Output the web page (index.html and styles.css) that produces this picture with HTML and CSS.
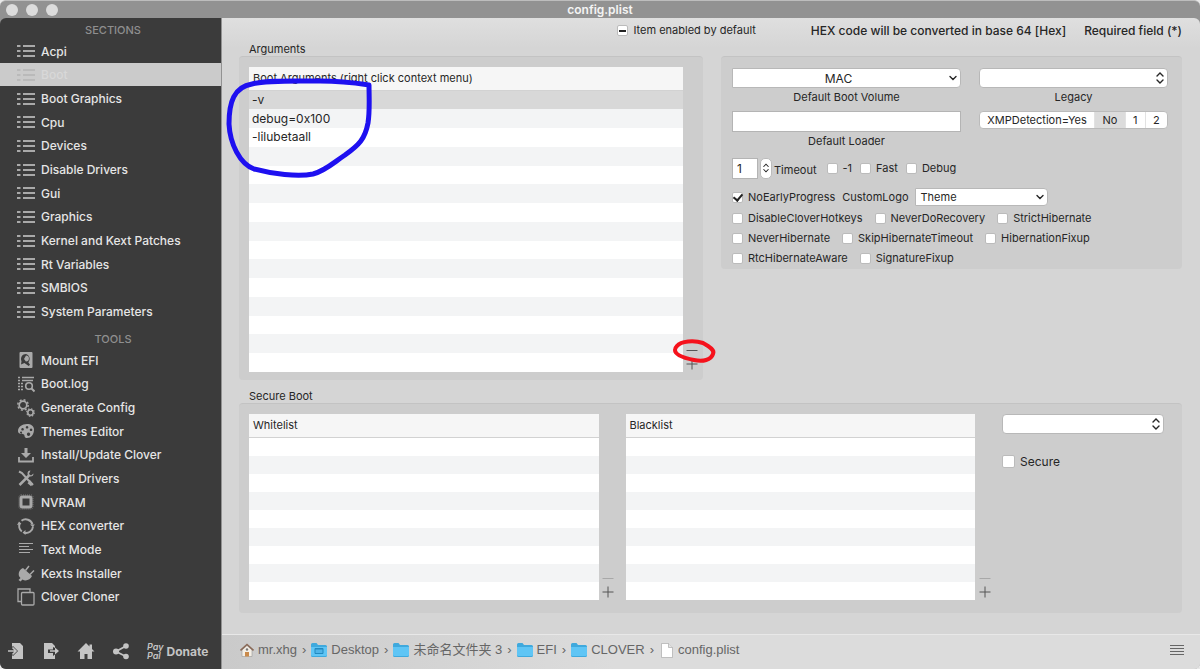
FILE: index.html
```html
<!DOCTYPE html>
<html lang="en">

<head>
    <meta charset="UTF-8">
    <meta name="viewport" content="width=device-width, initial-scale=1.0">
    <title>config.plist</title>
    <link rel="stylesheet" href="styles.css">
</head>

<body>
    <!-- shared icons -->
    <svg class="sprite" aria-hidden="true">
        <symbol id="list" viewBox="0 0 18 14">
            <path d="M0 2h3.500M0 7h3.500M0 12h3.500M6 2h12M6 7h12M6 12h12" stroke="currentColor" stroke-width="2.200" />
        </symbol>
        <symbol id="down" viewBox="0 0 8 6">
            <path d="M1 1.500l3 3 3-3" fill="none" stroke="currentColor" stroke-width="1.400" stroke-linecap="round" />
        </symbol>
        <symbol id="updown" viewBox="0 0 8 12">
            <path d="M1 4l3-3 3 3M1 8l3 3 3-3" fill="none" stroke="currentColor" stroke-width="1.400" stroke-linecap="round" />
        </symbol>
        <symbol id="plus" viewBox="0 0 12 12">
            <path d="M6 .5v11M.5 6h11" stroke="currentColor" />
        </symbol>
        <symbol id="minus" viewBox="0 0 12 12">
            <path d="M.5 6.500h11" stroke="currentColor" />
        </symbol>
        <symbol id="folder" viewBox="0 0 16 14">
            <path d="M0 1.500Q0 0 1.500 0h4l1.500 2h7.500Q16 2 16 3.500v9q0 1.500-1.500 1.500h-13Q0 14 0 12.500z" fill="#3fa9dd" />
            <path d="M0 4h16v8q0 1-1.500 1h-13Q0 13 0 12z" fill="#5fc5f5" />
        </symbol>
    </svg>

    <div class="window">
        <header class="titlebar">
            <div class="lights"><span></span><span></span><span></span></div>
            <h1>config.plist</h1>
        </header>

        <div class="content">
            <aside class="sidebar">
                <h2>SECTIONS</h2>
                <ul class="sections">
                    <li><a href="#"><svg><use href="#list" /></svg>Acpi</a></li>
                    <li class="selected"><a href="#"><svg><use href="#list" /></svg>Boot</a></li>
                    <li><a href="#"><svg><use href="#list" /></svg>Boot Graphics</a></li>
                    <li><a href="#"><svg><use href="#list" /></svg>Cpu</a></li>
                    <li><a href="#"><svg><use href="#list" /></svg>Devices</a></li>
                    <li><a href="#"><svg><use href="#list" /></svg>Disable Drivers</a></li>
                    <li><a href="#"><svg><use href="#list" /></svg>Gui</a></li>
                    <li><a href="#"><svg><use href="#list" /></svg>Graphics</a></li>
                    <li><a href="#"><svg><use href="#list" /></svg>Kernel and Kext Patches</a></li>
                    <li><a href="#"><svg><use href="#list" /></svg>Rt Variables</a></li>
                    <li><a href="#"><svg><use href="#list" /></svg>SMBIOS</a></li>
                    <li><a href="#"><svg><use href="#list" /></svg>System Parameters</a></li>
                </ul>
                <h2 class="second">TOOLS</h2>
                <ul class="tools">
                    <li><a href="#"><svg viewBox="0 0 18 18">
                        <path fill-rule="evenodd" d="M3.500 1h11q1 0 1 1v14q0 1-1 1h-11q-1 0-1-1V2q0-1 1-1zM9 3a5 5 0 0 0-4.500 7.200L4 13.500l3.400-1.500 4.300 3 1.300-1.300-1.700-2.500A5 5 0 0 0 9 3z" fill="currentColor" />
                        <path d="M9 4.500a3 3 0 1 1-.1 6L7 8z" fill="currentColor" />
                    </svg>Mount EFI</a></li>
                    <li><a href="#"><svg viewBox="0 0 18 18" fill="none" stroke="currentColor">
                        <path d="M5 2.500h12M5 5.500h11" stroke-width="1.500" />
                        <path d="M1 2.500h2.500M1 5.500h2.500M1 8.500h6M1 11.500h6M1 14.500h6" stroke-width="1.500" stroke-dasharray="2 1" />
                        <circle cx="12" cy="11" r="3.300" stroke-width="1.600" />
                        <path d="M14.500 13.500l3 3" stroke-width="2" />
                    </svg>Boot.log</a></li>
                    <li><a href="#"><svg viewBox="0 0 18 18" fill="none" stroke="currentColor">
                        <circle cx="6" cy="6" r="3.800" stroke-width="1.700" />
                        <circle cx="6" cy="6" r="5.200" stroke-width="1.500" stroke-dasharray="2 2.080" />
                        <circle cx="13.500" cy="13.500" r="2.700" stroke-width="1.600" />
                        <circle cx="13.500" cy="13.500" r="3.800" stroke-width="1.200" stroke-dasharray="1.500 1.480" />
                    </svg>Generate Config</a></li>
                    <li><a href="#"><svg viewBox="0 0 18 18">
                        <path fill-rule="evenodd" d="M10 2c4 0 7 2 7 5.500 0 5-3 8.500-7 8.500-3 0-2-2.500-3-3.500S1 13 1 9s4-7 9-7zM5.500 6a1.300 1.300 0 1 0 .1 0zM10 4a1.300 1.300 0 1 0 .1 0zM14 6.500a1.300 1.300 0 1 0 .1 0zM4 9.500a1 1 0 1 0 .1 0zM11.500 10.500a1.700 1.700 0 1 0 .1 0z" fill="currentColor" />
                    </svg>Themes Editor</a></li>
                    <li><a href="#"><svg viewBox="0 0 18 18">
                        <path d="M7.500 2h3v5H14l-5 5-5-5h3.500z" fill="currentColor" />
                        <path d="M2 11v4.500h14V11" fill="none" stroke="currentColor" stroke-width="1.800" />
                    </svg>Install/Update Clover</a></li>
                    <li><a href="#"><svg viewBox="0 0 18 18" fill="none" stroke="currentColor">
                        <path d="M2 2.500l3 1.500 7 8M12 11.500l4 4.500" stroke-width="2" />
                        <path d="M2.500 16L12 6.500" stroke-width="2.500" />
                        <path d="M13.500 1.500a3 3 0 1 0 3 3L14 6.500 12 5z" stroke="none" fill="currentColor" />
                        <path d="M11.500 13l3.500 3" stroke-width="3" />
                    </svg>Install Drivers</a></li>
                    <li><a href="#"><svg viewBox="0 0 18 18" fill="none" stroke="currentColor">
                        <rect x="4" y="4" width="10" height="10" rx="1.500" stroke-width="3" />
                        <rect x="2" y="2" width="14" height="14" rx="2" stroke-dasharray="1 1" opacity=".6" />
                    </svg>NVRAM</a></li>
                    <li><a href="#"><svg viewBox="0 0 18 18" fill="none" stroke="currentColor" stroke-width="2">
                        <path d="M4.500 3.800A7 7 0 0 1 15.500 7.500M16 9.500A7 7 0 0 1 7 15.700M4.800 14.500A7 7 0 0 1 3 5.800" />
                        <path d="M13 7.500h5L15.800 10zM0 8l2-3.500L4.500 7zM8.500 13v5L5.500 15.500z" fill="currentColor" stroke="none" />
                    </svg>HEX converter</a></li>
                    <li><a href="#"><svg viewBox="0 0 18 18">
                        <path d="M2 3.500h14M2 6.500h10M2 9.500h14M2 12.500h11" stroke="currentColor" />
                    </svg>Text Mode</a></li>
                    <li><a href="#"><svg viewBox="0 0 18 18">
                        <path d="M6 4l9 8c-1.500 4-6.500 5.500-9.500 3.500L3.500 17.500 1.500 16l2-2C0 11 2 5.500 6 4z" fill="currentColor" />
                        <path d="M8.500 6.500L12 2M13 10.500l4-4" stroke="currentColor" stroke-width="1.500" />
                    </svg>Kexts Installer</a></li>
                    <li><a href="#"><svg viewBox="0 0 18 18" fill="none" stroke="currentColor" stroke-width="1.300">
                        <path d="M4 13.500H1V1h12v3" />
                        <rect x="4.500" y="4.500" width="12.500" height="12.500" rx="1" />
                    </svg>Clover Cloner</a></li>
                </ul>
                <footer class="actions">
                    <button aria-label="Import"><svg viewBox="0 0 18 18">
                        <path d="M5 1h8l3 3v13H5v-4l1 1 5-5-5-5-1 1z" fill="currentColor" />
                        <path d="M1 9h7M5.500 5.500L9 9l-3.500 3.500" fill="none" stroke="currentColor" stroke-width="1.700" />
                    </svg></button>
                    <button aria-label="Export"><svg viewBox="0 0 18 18">
                        <path d="M2 1h8l3 3v2l-2-1v2.500H6v3.500h5v3l2-1.500V17H2z" fill="currentColor" />
                        <path d="M8 8.200h5V5.500L17 9l-4 3.500V9.800H8z" fill="currentColor" />
                    </svg></button>
                    <button aria-label="Home"><svg viewBox="0 0 18 18">
                        <path d="M9 1l3.500 3.500V2.500h2.500V7l2.500 2.500H15V17h-4.500v-5h-3v5H3V9.500H.5z" fill="currentColor" />
                    </svg></button>
                    <button aria-label="Share"><svg viewBox="0 0 18 18" fill="currentColor">
                        <path d="M14 4L4 9.500l10 5" fill="none" stroke="currentColor" stroke-width="1.800" />
                        <circle cx="4" cy="9.500" r="3" /><circle cx="14" cy="4" r="2.800" /><circle cx="14" cy="14.500" r="2.800" />
                    </svg></button>
                    <button class="donate"><i>Pay<br>Pal</i>Donate</button>
                </footer>
            </aside>

            <main>
                <div class="info">
                    <label class="check"><input type="checkbox" class="mixed">Item enabled by default</label>
                    <span class="hex">HEX code will be converted in base 64 [Hex]</span>
                    <span>Required field (*)</span>
                </div>

                <div class="columns">
                    <section>
                        <h3>Arguments</h3>
                        <div class="box arguments">
                            <table>
                                <thead><tr><th>Boot Arguments (right click context menu)</th></tr></thead>
                                <tbody>
                                    <tr class="current"><td>-v</td></tr>
                                    <tr><td>debug=0x100</td></tr>
                                    <tr><td>-lilubetaall</td></tr>
                                    <tr><td></td></tr>
                                    <tr><td></td></tr>
                                    <tr><td></td></tr>
                                    <tr><td></td></tr>
                                    <tr><td></td></tr>
                                    <tr><td></td></tr>
                                    <tr><td></td></tr>
                                    <tr><td></td></tr>
                                    <tr><td></td></tr>
                                    <tr><td></td></tr>
                                    <tr><td></td></tr>
                                    <tr><td></td></tr>
                                </tbody>
                            </table>
                            <div class="edit">
                                <button aria-label="Remove argument"><svg><use href="#minus" /></svg></button>
                                <button aria-label="Add argument"><svg><use href="#plus" /></svg></button>
                            </div>
                        </div>
                    </section>

                    <section class="options-section">
                        <div class="box options">
                            <div class="fields">
                                <div class="field">
                                    <div class="select combo">
                                        <select id="volume"><option>MAC</option></select>
                                        <svg><use href="#down" /></svg>
                                    </div>
                                    <label for="volume">Default Boot Volume</label>
                                    <input type="text" id="loader">
                                    <label for="loader">Default Loader</label>
                                </div>
                                <div class="field">
                                    <div class="select popup">
                                        <select id="legacy"><option></option></select>
                                        <svg><use href="#updown" /></svg>
                                    </div>
                                    <label for="legacy">Legacy</label>
                                    <div class="segments">
                                        <button>XMPDetection=Yes</button>
                                        <button class="on">No</button>
                                        <button>1</button>
                                        <button>2</button>
                                    </div>
                                </div>
                            </div>
                            <div class="line timeout">
                                <input type="text" id="timeout" value="1">
                                <button class="stepper" aria-label="Step timeout"><svg><use href="#updown" /></svg></button>
                                <label for="timeout">Timeout</label>
                                <label class="check"><input type="checkbox">-1</label>
                                <label class="check"><input type="checkbox">Fast</label>
                                <label class="check"><input type="checkbox">Debug</label>
                            </div>
                            <div class="line logo">
                                <label class="check"><input type="checkbox" checked>NoEarlyProgress</label>
                                <label for="theme">CustomLogo</label>
                                <div class="select combo theme">
                                    <select id="theme"><option>Theme</option></select>
                                    <svg><use href="#down" /></svg>
                                </div>
                            </div>
                            <div class="line">
                                <label class="check"><input type="checkbox">DisableCloverHotkeys</label>
                                <label class="check"><input type="checkbox">NeverDoRecovery</label>
                                <label class="check"><input type="checkbox">StrictHibernate</label>
                            </div>
                            <div class="line">
                                <label class="check"><input type="checkbox">NeverHibernate</label>
                                <label class="check"><input type="checkbox">SkipHibernateTimeout</label>
                                <label class="check"><input type="checkbox">HibernationFixup</label>
                            </div>
                            <div class="line">
                                <label class="check"><input type="checkbox">RtcHibernateAware</label>
                                <label class="check"><input type="checkbox">SignatureFixup</label>
                            </div>
                        </div>
                    </section>
                </div>

                <section class="secure-section">
                    <h3>Secure Boot</h3>
                    <div class="box secure">
                        <table>
                            <thead><tr><th>Whitelist</th></tr></thead>
                            <tbody>
                                <tr><td></td></tr>
                                <tr><td></td></tr>
                                <tr><td></td></tr>
                                <tr><td></td></tr>
                                <tr><td></td></tr>
                                <tr><td></td></tr>
                                <tr><td></td></tr>
                                <tr><td></td></tr>
                                <tr><td></td></tr>
                            </tbody>
                        </table>
                        <div class="edit">
                            <button disabled aria-label="Remove from whitelist"><svg><use href="#minus" /></svg></button>
                            <button aria-label="Add to whitelist"><svg><use href="#plus" /></svg></button>
                        </div>
                        <table>
                            <thead><tr><th>Blacklist</th></tr></thead>
                            <tbody>
                                <tr><td></td></tr>
                                <tr><td></td></tr>
                                <tr><td></td></tr>
                                <tr><td></td></tr>
                                <tr><td></td></tr>
                                <tr><td></td></tr>
                                <tr><td></td></tr>
                                <tr><td></td></tr>
                                <tr><td></td></tr>
                            </tbody>
                        </table>
                        <div class="edit">
                            <button disabled aria-label="Remove from blacklist"><svg><use href="#minus" /></svg></button>
                            <button aria-label="Add to blacklist"><svg><use href="#plus" /></svg></button>
                        </div>
                        <div class="policy">
                            <div class="select popup">
                                <select aria-label="Secure boot policy"><option></option></select>
                                <svg><use href="#updown" /></svg>
                            </div>
                            <label class="check big"><input type="checkbox">Secure</label>
                        </div>
                    </div>
                </section>

                <nav class="pathbar">
                    <a href="#"><svg class="home" viewBox="0 0 14 14">
                        <path d="M2 7l5-4.500L12 7v6.500H2z" fill="#f4efe6" stroke="#999" stroke-width=".6" />
                        <path d="M.5 7.500L7 1.500l6.500 6" fill="none" stroke="#8a6a58" stroke-width="1.600" />
                        <path d="M5 9h4v4.500H5z" fill="#c98a4b" />
                        <circle cx="7" cy="6.500" r="1.200" fill="#777" />
                    </svg>mr.xhg</a><span>›</span>
                    <a href="#"><svg viewBox="0 0 16 14"><use href="#folder" />
                        <path d="M4 5.500h8v5H4z" fill="#4fb4e8" stroke="#2389bf" />
                        <path d="M4 6h8" stroke="#2389bf" />
                    </svg>Desktop</a><span>›</span>
                    <a href="#"><svg><use href="#folder" /></svg>未命名文件夹 3</a><span>›</span>
                    <a href="#"><svg><use href="#folder" /></svg>EFI</a><span>›</span>
                    <a href="#"><svg><use href="#folder" /></svg>CLOVER</a><span>›</span>
                    <a href="#"><svg class="doc" viewBox="0 0 12 15">
                        <path d="M.5.5h7l4 4v10H.5z" fill="#fff" stroke="#aaa" stroke-width=".7" />
                        <path d="M7.500.5v4h4" fill="#e4e4e4" stroke="#aaa" stroke-width=".7" />
                    </svg>config.plist</a>
                    <button class="menu" aria-label="Menu"><svg viewBox="0 0 14 12">
                        <path d="M0 1.500h14M0 4.500h14M0 7.500h14M0 10.500h14" stroke="#666" />
                    </svg></button>
                </nav>

                <!-- hand-drawn marks over the arguments list -->
                <svg class="marks" viewBox="0 0 500 360" fill="none" stroke-linejoin="round" stroke-linecap="round">
                    <path d="M30 66C45 62 70 63 98 63C122 63 134 65 147 67C147 80 148 92 146 105C143 121 137 127 123 137C111 145 103 153 91 156C76 159 50 156 32 151C18 146 8 126 7 106C7 84 12 69 30 66Z" stroke="#1e10f0" stroke-width="5" />
                    <path d="M455 328C459 323 472 322 481 325C488 329 493 332 491 336C489 342 481 344 472 342C462 340 453 337 453 332C453 330 454 329 455 328Z" stroke="#f5121c" stroke-width="4" />
                </svg>
            </main>
        </div>
    </div>
</body>

</html>
```
FILE: styles.css
```css
* {
    box-sizing: border-box;
    margin: 0;
    padding: 0;
}

body {
    font-family: Inter, "Noto Sans CJK SC", sans-serif;
    font-size: 11px;
    line-height: 13px;
    color: #262626;
    background: #e8e8e8;
}

button,
input,
select {
    font: inherit;
    color: inherit;
}

button {
    border: none;
    background: none;
}

a {
    color: inherit;
    text-decoration: none;
}

ul {
    list-style: none;
}

.sprite {
    display: none;
}

.window {
    display: flex;
    flex-direction: column;
    min-height: 100vh;
    background: #929292;
    border-top: 1px solid #bdbdbd;
    border-radius: 6px;
    overflow: hidden;
}

/* title bar */
.titlebar {
    display: grid;
    grid-template-columns: 1fr auto 1fr;
    align-items: center;
    height: 17px;
    padding: 0 6px;
}

.lights {
    display: flex;
    gap: 8px;
}

.lights span {
    width: 12px;
    height: 12px;
    border-radius: 50%;
    background: #dcdcdc;
}

.titlebar h1 {
    font-size: 12px;
    font-weight: 600;
    color: #f4f4f4;
}

.content {
    flex: 1;
    display: flex;
}

/* sidebar */
.sidebar {
    display: flex;
    flex-direction: column;
    width: 221px;
    background: #3b3b3b;
    border-radius: 6px 0 0 0;
    color: #e6e6e6;
    font-size: 12px;
    line-height: 15px;
    font-weight: 500;
}

.sidebar h2 {
    margin-top: 3px;
    padding-left: 5px;
    font-size: 11px;
    line-height: 18px;
    font-weight: 500;
    text-align: center;
    color: #8f8f8f;
}

.sidebar h2.second {
    margin-top: 7px;
}

.sidebar ul {
    display: grid;
    grid-auto-rows: 1fr;
}

.sections {
    height: 284px;
}

.tools {
    height: 260px;
}

.sidebar li a {
    display: flex;
    align-items: center;
    gap: 6px;
    height: 100%;
    padding: 1px 0 0 17px;
}

.sidebar li svg {
    width: 18px;
    height: 18px;
    color: #a9a9a9;
}

.sections li svg {
    height: 14px;
}

.sidebar .selected {
    background: #cbcbcb;
    color: #d8d8d8;
}

.sidebar .selected svg {
    color: #bababa;
}

.actions {
    display: flex;
    align-items: center;
    gap: 17px;
    height: 34px;
    margin-top: auto;
    padding: 0 0 2px 7px;
    color: #c4c4c4;
}

.actions svg {
    display: block;
    width: 18px;
    height: 18px;
}

.actions .donate {
    display: flex;
    align-items: center;
    gap: 3px;
    font-size: 12px;
    font-weight: 700;
}

.donate i {
    font-size: 9px;
    line-height: 9px;
    font-weight: 600;
    text-align: left;
}

/* main area */
main {
    position: relative;
    flex: 1;
    display: flex;
    flex-direction: column;
    min-width: 0;
    margin-left: 1px;
    border-radius: 0 6px 0 0;
    background: linear-gradient(#dfdfdf, #d5d5d5 30px);
}

.info {
    display: flex;
    justify-content: flex-end;
    align-items: center;
    gap: 18px;
    height: 25px;
    padding-right: 18px;
    font-size: 12px;
    font-weight: 500;
}

.info .check {
    font-size: 11px;
    font-weight: 400;
}

.info .hex {
    margin-left: 37px;
}

.columns {
    display: grid;
    grid-template-columns: minmax(0, 464fr) minmax(0, 461fr);
    gap: 18px;
    padding: 0 18px 0 17px;
}

h3 {
    padding-left: 10px;
    font-size: 11px;
    font-weight: 400;
}

.box {
    background: #cdcdcd;
    border-top: 1px solid #c3c3c3;
    border-radius: 4px;
}

.arguments {
    display: grid;
    grid-template-columns: minmax(0, 1fr) 18px;
    padding: 10px 2px 8px 10px;
}

table {
    width: 100%;
    height: 305px;
    border-collapse: collapse;
    background: #fff;
}

th {
    height: 23px;
    padding: 1px 4px 0;
    text-align: left;
    font-weight: 400;
    background: #f6f6f6;
    border-bottom: 1px solid #d2d2d2;
}

td {
    padding: 0 3px;
    font-size: 12px;
    line-height: 18px;
}

/* keeps empty rows as tall as the filled ones */
td::before {
    content: "\200b";
}

tbody tr:nth-child(even) {
    background: #f3f4f5;
}

tbody .current {
    background: #d8d8d8;
}

.edit {
    display: flex;
    flex-direction: column;
    align-items: center;
    align-self: end;
    gap: 2px;
    padding-bottom: 2px;
    color: #555;
}

.edit svg {
    display: block;
    width: 12px;
    height: 12px;
}

.edit button:disabled {
    color: #a8a8a8;
}

/* boot options */
.options-section {
    padding-top: 13px;
}

.options {
    padding: 11px 14px 1px 11px;
}

.fields {
    display: grid;
    grid-template-columns: minmax(0, 229fr) minmax(0, 189fr);
    gap: 18px;
}

.field {
    display: flex;
    flex-direction: column;
    text-align: center;
}

.field label {
    padding: 2px 0;
    line-height: 15px;
}

input[type="text"] {
    height: 21px;
    padding: 0 4px;
    background: #fff;
    border: 1px solid #b4b4b4;
    font-size: 12px;
}

.field input[type="text"] {
    margin-top: 4px;
}

/* the arrow shares the grid cell of the select */
.select {
    display: grid;
    grid-template-columns: minmax(0, 1fr);
    align-items: center;
}

.select select,
.select svg {
    grid-area: 1 / 1;
}

.select select {
    appearance: none;
    width: 100%;
    height: 20px;
    padding: 0 4px;
    background: #fff;
    border: 1px solid #b8b8b8;
    border-radius: 4px;
    outline: none;
}

.select svg {
    justify-self: end;
    width: 8px;
    height: 12px;
    margin-right: 4px;
    pointer-events: none;
}

.combo select {
    border-radius: 0 4px 4px 0;
}

.combo svg {
    height: 6px;
}

.field .combo select {
    padding-right: 20px;
    font-size: 12px;
    text-align-last: center;
}

.theme {
    width: 133px;
}

.theme select {
    height: 18px;
}

.segments {
    display: flex;
    height: 18px;
    margin-top: 4px;
    background: #fff;
    border: 1px solid #bbb;
    border-radius: 4px;
    overflow: hidden;
}

.segments button {
    flex: 1 1 auto;
    border-left: 1px solid #e2e2e2;
}

.segments button:first-child {
    border-left: none;
}

.segments .on {
    background: #dcdcdc;
}

.line {
    display: flex;
    align-items: center;
    gap: 12px;
    height: 20px;
}

.timeout {
    gap: 8px;
    height: 24px;
    margin-top: 5px;
}

.timeout input[type="text"] {
    width: 26px;
}

.timeout .stepper {
    display: flex;
    align-items: center;
    justify-content: center;
    width: 12px;
    height: 21px;
    margin-left: -6px;
    background: #fff;
    border: 1px solid #bbb;
    border-radius: 5px;
}

.stepper svg {
    width: 6px;
    height: 12px;
}

.timeout .stepper + label {
    margin: 4px 2px 0 -6px;
}

.logo {
    gap: 7px;
    height: 22px;
    margin-top: 6px;
}

.check {
    display: flex;
    align-items: center;
    gap: 5px;
    white-space: nowrap;
}

input[type="checkbox"] {
    appearance: none;
    display: flex;
    align-items: center;
    justify-content: center;
    width: 11px;
    height: 11px;
    background: #fff;
    border: 1px solid #bbb;
    border-radius: 2px;
}

input[type="checkbox"]:checked::before {
    content: "";
    width: 4px;
    height: 7px;
    margin-bottom: 2px;
    border: solid #222;
    border-width: 0 2px 2px 0;
    transform: rotate(40deg);
}

input[type="checkbox"].mixed::before {
    content: "";
    width: 7px;
    height: 2px;
    background: #222;
}

/* secure boot */
.secure-section {
    margin: 10px 18px 21px 17px;
}

.secure {
    display: grid;
    grid-template-columns: minmax(0, 1fr) 27px minmax(0, 1fr) 27px minmax(0, 162px);
    padding: 10px 18px 13px 10px;
}

.secure table {
    height: 186px;
}

.secure .edit {
    margin-right: 8px;
}

.big {
    margin-top: 21px;
    font-size: 12px;
}

.big input[type="checkbox"] {
    width: 13px;
    height: 13px;
}

/* path bar */
.pathbar {
    display: flex;
    align-items: center;
    gap: 5px;
    height: 35px;
    margin-top: auto;
    padding: 0 16px 4px 18px;
    border-top: 1px solid #e8e8e8;
    background: linear-gradient(90deg, #cacaca, #dcdcdc 40%);
    font-family: "Liberation Sans", "Noto Sans CJK SC", sans-serif;
    font-size: 13px;
    line-height: 16px;
    color: #666;
}

.pathbar a {
    display: flex;
    align-items: center;
    gap: 4px;
    white-space: nowrap;
}

.pathbar a svg {
    width: 16px;
    height: 14px;
}

.pathbar svg.home {
    width: 14px;
}

.pathbar svg.doc {
    width: 12px;
    height: 15px;
    margin: 0 1px 0 2px;
}

.menu {
    margin-left: auto;
}

.menu svg {
    display: block;
    width: 14px;
    height: 12px;
}

.marks {
    position: absolute;
    top: 0;
    left: 0;
    width: 500px;
    height: 360px;
    pointer-events: none;
}
```
